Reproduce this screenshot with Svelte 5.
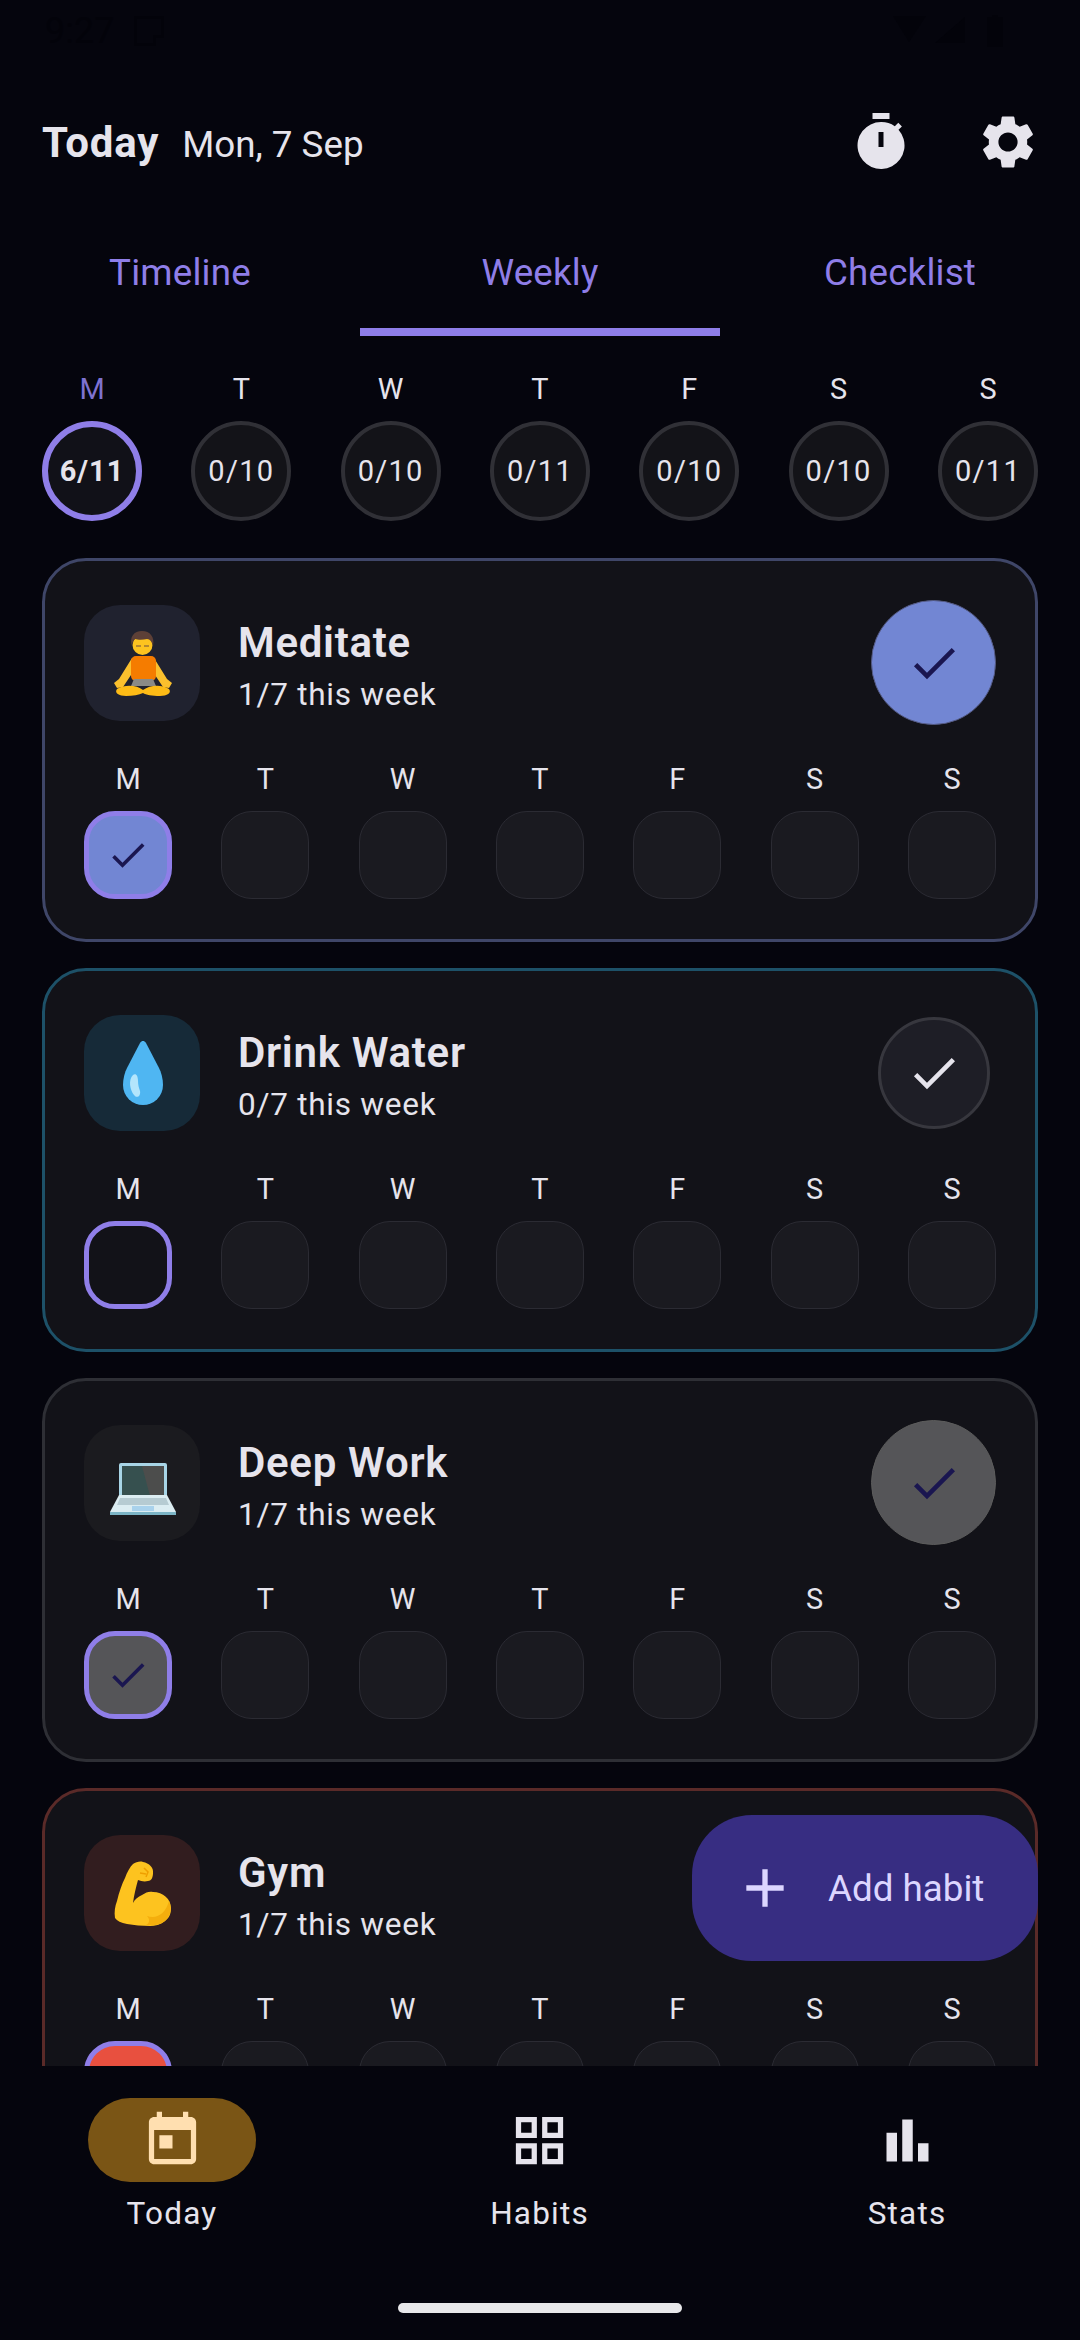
<script>
  const dayTotals = [
    { label: "M", value: "6/11", today: true },
    { label: "T", value: "0/10" },
    { label: "W", value: "0/10" },
    { label: "T", value: "0/11" },
    { label: "F", value: "0/10" },
    { label: "S", value: "0/10" },
    { label: "S", value: "0/11" },
  ];
  const letters = ["M", "T", "W", "T", "F", "S", "S"];
  const habits = [
    { id: "meditate", name: "Meditate", count: 1, done: true },
    { id: "water", name: "Drink Water", count: 0, done: false },
    { id: "work", name: "Deep Work", count: 1, done: true },
    { id: "gym", name: "Gym", count: 1, done: true },
  ];
  const checkPath = "M9 16.17 4.83 12l-1.42 1.41L9 19 21 7l-1.41-1.41z";
</script>

<div class="screen">
  <div class="statusbar">
    <div class="status-left">
      <span>9:27</span>
      <svg width="30" height="30" viewBox="0 0 30 30"><path d="M0 0h30v22h-8v8H0zM3 3v24h16v-8h8V3z" /></svg>
    </div>
    <svg width="118" height="32" viewBox="0 0 118 32">
      <path d="M0 1h33L16 27z" />
      <path d="M72 2v26H42z" />
      <path d="M94 2h5V0h6v2h5v30H94z" />
    </svg>
  </div>

  <header class="topbar">
    <div class="heading">
      <span class="today">Today</span>
      <span class="date">Mon, 7 Sep</span>
    </div>
    <div class="actions">
      <svg width="64" height="64" viewBox="0 0 64 64">
        <g transform="translate(0 2)">
          <path d="M24.500 1h17v6h-17z" />
          <path
            fill-rule="evenodd"
            d="M33 10a23.500 23.500 0 1 0 17.500 7.800l3.400-3.400-3.600-3.700-3.500 3.500A23.400 23.400 0 0 0 33 10zM30.500 20h5v15h-5z"
          />
        </g>
      </svg>
      <svg width="64" height="64" viewBox="0 0 24 24">
        <path
          d="M19.14 12.94c.04-.3.06-.61.06-.94 0-.32-.02-.64-.07-.94l2.03-1.58c.18-.14.23-.41.12-.61l-1.92-3.32c-.12-.22-.37-.29-.59-.22l-2.39.96c-.5-.38-1.03-.7-1.62-.94l-.36-2.54c-.04-.24-.24-.41-.48-.41h-3.84c-.24 0-.43.17-.47.41l-.36 2.54c-.59.24-1.13.57-1.62.94l-2.39-.96c-.22-.08-.47 0-.59.22L2.74 8.87c-.12.21-.08.47.12.61l2.03 1.58c-.05.3-.09.63-.09.94s.02.64.07.94l-2.03 1.58c-.18.14-.23.41-.12.61l1.92 3.32c.12.22.37.29.59.22l2.39-.96c.5.38 1.03.7 1.62.94l.36 2.54c.05.24.24.41.48.41h3.84c.24 0 .44-.17.47-.41l.36-2.54c.59-.24 1.13-.56 1.62-.94l2.39.96c.22.08.47 0 .59-.22l1.92-3.32c.12-.22.07-.47-.12-.61l-2.01-1.58zM12 15.600c-1.980 0-3.600-1.620-3.600-3.600s1.620-3.600 3.600-3.600 3.600 1.620 3.600 3.600-1.620 3.600-3.600 3.600z"
        />
      </svg>
    </div>
  </header>

  <nav class="tabs">
    <span class="tab">Timeline</span>
    <span class="tab active">Weekly</span>
    <span class="tab">Checklist</span>
  </nav>

  <div class="days">
    {#each dayTotals as day}
      <div class="day" class:today-day={day.today}>
        <span class="day-label">{day.label}</span>
        <span class="day-ring">{day.value}</span>
      </div>
    {/each}
  </div>

  <main class="list">
    {#each habits as habit}
      <section class="card {habit.id}">
        <div class="card-head">
          <div class="emoji">
            {#if habit.id === "meditate"}
              <svg width="116" height="116" viewBox="0 0 116 116">
                <path d="M48 53 35 74l-5 4 3 5 6-1 14-21z" fill="#fbc02d" />
                <path d="M70 53l13 21 5 4-3 5-6-1-14-21z" fill="#fbc02d" />
                <rect x="47" y="51" width="25" height="25" rx="5" fill="#f57c00" />
                <path d="M50 74h19l3 7H47z" fill="#8a8a86" />
                <path d="M33 84c8-5 20-4 26 1 7-5 18-6 26-1 3 4-2 7-9 7-8 0-14-1-17-3-4 2-10 3-17 3-7 0-12-3-9-7z" fill="#fdbb16" />
                <circle cx="58.500" cy="40" r="10" fill="#fdc31f" />
                <path d="M48 41c-3-9 2-15 10-15s13 6 11 15c-1-4-3-7-6-7-4 1-9 1-12 0-2 2-3 4-3 7z" fill="#5d4037" />
                <path d="M52 41h5M60 41h5" stroke="#6d4c41" stroke-width="1.200" />
              </svg>
            {:else if habit.id === "water"}
              <svg width="116" height="116" viewBox="0 0 116 116">
                <path d="M59 26c1 0 2 .5 3 2l13 25c2 4 4 10 4 17a20 20 0 0 1-40 0c0-7 2-13 4-17l13-25c1-1.500 2-2 3-2z" fill="#4fb6f2" />
                <path d="M49 60c3-2 5 1 5 6 0 4 1 7 2 10 1 5-3 8-6 4-4-5-6-15-1-20z" fill="#b3e5fc" />
              </svg>
            {:else if habit.id === "work"}
              <svg width="116" height="116" viewBox="0 0 116 116">
                <rect x="35" y="38" width="48" height="36" rx="2" fill="#a8d5e6" />
                <rect x="38" y="41" width="42" height="30" fill="#36504f" />
                <path d="M58 41h22v30H66z" fill="#4c4d4c" />
                <path d="M35 70h48l9 17H26z" fill="#dcedf2" />
                <path d="M26 87h66v3H26z" fill="#7cb5c6" />
                <path d="M36 73h46l3 7H33z" fill="#b6cbd2" />
                <rect x="48" y="81" width="22" height="5" fill="#a9d2ec" />
              </svg>
            {:else}
              <svg width="116" height="116" viewBox="0 0 116 116">
                <path d="M59 27C65 28 70 33 69 38C69 43 67 46 64 46C60 47 57 46 54 45C52 52 50 60 49 68C51 64 54 62 58 60C62 57 66 56 69 57C79 57 87 64 87 73C87 79 85 83 81 86C76 90 71 91 66 91C58 91 50 90 43 89C37 88 33 86 31 83C30 77 31 71 33 66C35 57 38 49 41 43C43 37 46 32 49 29C52 27 56 26 59 27z" fill="#fdc31f" />
                <path d="M63 81C72 84 81 80 85 66C88 74 87 80 81 86C76 90 70 91 62 90C66 88 66 84 63 81z" fill="#f4ae0d" />
                <path d="M60 33l4 4-2 5M56 38l6 1" stroke="#ef9f00" stroke-width="1.500" fill="none" />
              </svg>
            {/if}
          </div>
          <div class="names">
            <span class="name">{habit.name}</span>
            <span class="progress">{habit.count}/7 this week</span>
          </div>
          <div class="toggle-slot">
            <div class="toggle" class:on={habit.done}>
              <svg width="56" height="56" viewBox="0 0 24 24"><path d={checkPath} /></svg>
            </div>
          </div>
        </div>
        <div class="week">
          {#each letters as letter, i}
            <div class="week-col">
              <span class="week-label">{letter}</span>
              <div class="cell" class:current={i === 0} class:filled={i === 0 && habit.done}>
                {#if i === 0 && habit.done}
                  <svg width="44" height="44" viewBox="0 0 24 24"><path d={checkPath} /></svg>
                {/if}
              </div>
            </div>
          {/each}
        </div>
      </section>
    {/each}
  </main>

  <button class="fab">
    <svg width="64" height="64" viewBox="0 0 24 24"><path d="M19 13h-6v6h-2v-6H5v-2h6V5h2v6h6v2z" /></svg>
    <span>Add habit</span>
  </button>

  <footer class="bottom">
    <div class="navbar">
      <div class="nav-item selected">
        <div class="pill">
          <svg width="63" height="63" viewBox="0 0 24 24">
            <path d="M19 3h-1V1h-2v2H8V1H6v2H5c-1.110 0-1.990.9-1.990 2L3 19c0 1.100.89 2 2 2h14c1.100 0 2-.9 2-2V5c0-1.100-.9-2-2-2zm0 16H5V8h14v11zM7 10h5v5H7z" />
          </svg>
        </div>
        <span>Today</span>
      </div>
      <div class="nav-item">
        <div class="pill">
          <svg width="63" height="63" viewBox="0 0 24 24">
            <path d="M3 3v8h8V3H3zm6 6H5V5h4v4zm-6 4v8h8v-8H3zm6 6H5v-4h4v4zm4-16v8h8V3h-8zm6 6h-4V5h4v4zm-6 4v8h8v-8h-8zm6 6h-4v-4h4v4z" />
          </svg>
        </div>
        <span>Habits</span>
      </div>
      <div class="nav-item">
        <div class="pill">
          <svg width="63" height="63" viewBox="0 0 24 24">
            <path d="M4 9h4v11H4zM10 4h4v16h-4zM16 13h4v7h-4z" />
          </svg>
        </div>
        <span>Stats</span>
      </div>
    </div>
    <div class="home-bar"></div>
  </footer>
</div>

<style>
  :global(body) {
    margin: 0;
    background: #05050d;
  }

  .screen {
    position: relative;
    display: flex;
    flex-direction: column;
    width: 1080px;
    height: 2340px;
    overflow: hidden;
    background: #05050d;
    color: #e6e4ec;
    font-family: Roboto, "Liberation Sans", sans-serif;
  }

  .statusbar {
    display: flex;
    justify-content: space-between;
    align-items: center;
    height: 62px;
    padding: 0 69px 0 45px;
    box-sizing: border-box;
    margin-bottom: 24px;
    color: #03030a;
    fill: #03030a;
    font-size: 36px;
  }
  .status-left {
    display: flex;
    align-items: center;
    gap: 20px;
  }

  .topbar {
    display: flex;
    justify-content: space-between;
    align-items: center;
    height: 112px;
    padding: 0 42px;
  }
  .heading {
    display: flex;
    align-items: baseline;
    gap: 23px;
  }
  .today {
    font-size: 42px;
    font-weight: 700;
    letter-spacing: 0.8px;
  }
  .date {
    font-size: 36.750px;
  }
  .actions {
    display: flex;
    gap: 64px;
    margin-right: -2px;
  }
  .actions svg {
    fill: #e6e4ec;
  }

  .tabs {
    display: grid;
    grid-template-columns: repeat(3, 1fr);
    height: 138px;
  }
  .tab {
    display: flex;
    justify-content: center;
    align-items: center;
    padding-top: 19px;
    box-sizing: border-box;
    border-bottom: 8px solid transparent;
    color: #8f7ee8;
    font-size: 36.750px;
    letter-spacing: 0.2px;
  }
  .tab.active {
    border-bottom-color: #8f7ee8;
  }

  .days {
    display: flex;
    justify-content: space-between;
    padding: 35px 42px 0;
  }
  .day {
    display: flex;
    flex-direction: column;
    align-items: center;
    width: 100px;
  }
  .day-label {
    height: 50px;
    line-height: 36px;
    font-size: 28.900px;
  }
  .today-day .day-label {
    color: #7e72d0;
  }
  .day-ring {
    display: flex;
    justify-content: center;
    align-items: center;
    width: 100px;
    height: 100px;
    box-sizing: border-box;
    border: 4px solid #303036;
    border-radius: 50%;
    background: #131318;
    font-size: 29px;
    letter-spacing: 1.300px;
  }
  .today-day .day-ring {
    border: 6px solid #8f7ee8;
    background: #111118;
    font-weight: 700;
    letter-spacing: 1px;
  }

  .list {
    display: flex;
    flex-direction: column;
    flex: 1;
    gap: 26px;
    min-height: 0;
    margin-top: 37px;
    padding: 0 42px;
    overflow: hidden;
  }
  .card {
    flex: none;
    height: 384px;
    box-sizing: border-box;
    padding: 39px 39px 0;
    border: 3px solid #2e2f35;
    border-radius: 44px;
    background: #121218;
  }
  .meditate {
    border-color: #3f4668;
  }
  .water {
    border-color: #1d5168;
  }
  .gym {
    border-color: #5a2a28;
  }

  .card-head {
    display: flex;
    align-items: center;
    height: 125px;
  }
  .emoji {
    flex: none;
    width: 116px;
    height: 116px;
    border-radius: 36px;
    background: #1b1b1f;
  }
  .meditate .emoji {
    background: #20222f;
  }
  .water .emoji {
    background: #162a38;
  }
  .gym .emoji {
    background: #321d1f;
  }

  .names {
    display: flex;
    flex-direction: column;
    flex: 1;
    gap: 7px;
    margin-left: 38px;
    padding-top: 8px;
  }
  .name {
    line-height: 50px;
    font-size: 42px;
    font-weight: 600;
    letter-spacing: 0.7px;
  }
  .progress {
    line-height: 40px;
    font-size: 31.500px;
    letter-spacing: 0.75px;
  }

  .toggle-slot {
    display: flex;
    justify-content: center;
    align-items: center;
    width: 125px;
    height: 125px;
  }
  .toggle {
    display: flex;
    justify-content: center;
    align-items: center;
    width: 112px;
    height: 112px;
    box-sizing: border-box;
    border: 3px solid #37373e;
    border-radius: 50%;
    background: #1e1e26;
    fill: #e6e4ec;
  }
  .toggle.on {
    width: 125px;
    height: 125px;
    border: 1.500px solid #555b85;
    background: #7286d3;
    fill: #1a1650;
  }
  .work .toggle.on {
    border-color: #5c5c5c;
    background: #555558;
  }
  .gym .toggle.on {
    background: #e8503f;
  }

  .week {
    display: flex;
    justify-content: space-between;
    margin-top: 37px;
  }
  .week-col {
    display: flex;
    flex-direction: column;
    align-items: center;
    width: 88px;
  }
  .week-label {
    height: 49px;
    line-height: 34px;
    font-size: 28.900px;
  }
  .cell {
    display: flex;
    justify-content: center;
    align-items: center;
    width: 88px;
    height: 88px;
    box-sizing: border-box;
    border: 1px solid #2b2b33;
    border-radius: 31px;
    background: #1a1a20;
  }
  .cell.current {
    border: 5.500px solid #8f7ee8;
    background: #121218;
  }
  .cell.filled {
    background: #7286d3;
    fill: #1a1650;
  }
  .work .cell.filled {
    background: #555558;
  }
  .gym .cell.filled {
    background: #e8503f;
  }

  /* floats over the list */
  .fab {
    position: absolute;
    right: 42px;
    bottom: 379px;
    display: flex;
    align-items: center;
    gap: 31px;
    width: 346px;
    height: 146px;
    padding: 0 0 0 41px;
    box-sizing: border-box;
    border: none;
    border-radius: 60px;
    background: #372d82;
    color: #dcd6ff;
    fill: #dcd6ff;
    font-family: inherit;
    font-size: 36.750px;
  }

  .bottom {
    display: flex;
    flex-direction: column;
    flex: none;
    height: 274px;
    box-sizing: border-box;
    background: #05050d;
  }
  .navbar {
    display: flex;
    justify-content: space-between;
    padding: 32px 89px 0 88px;
  }
  .nav-item {
    display: flex;
    flex-direction: column;
    align-items: center;
    width: 168px;
    font-size: 31.500px;
    letter-spacing: 1.200px;
  }
  .pill {
    display: flex;
    justify-content: center;
    align-items: center;
    width: 168px;
    height: 84px;
    margin-bottom: 13px;
    border-radius: 42px;
    fill: #e6e4ec;
  }
  .selected .pill {
    background: #7a5515;
    fill: #ffdfb0;
  }
  .home-bar {
    align-self: center;
    width: 284px;
    height: 10px;
    margin-top: 71px;
    border-radius: 5px;
    background: #e8e8ea;
  }
</style>
